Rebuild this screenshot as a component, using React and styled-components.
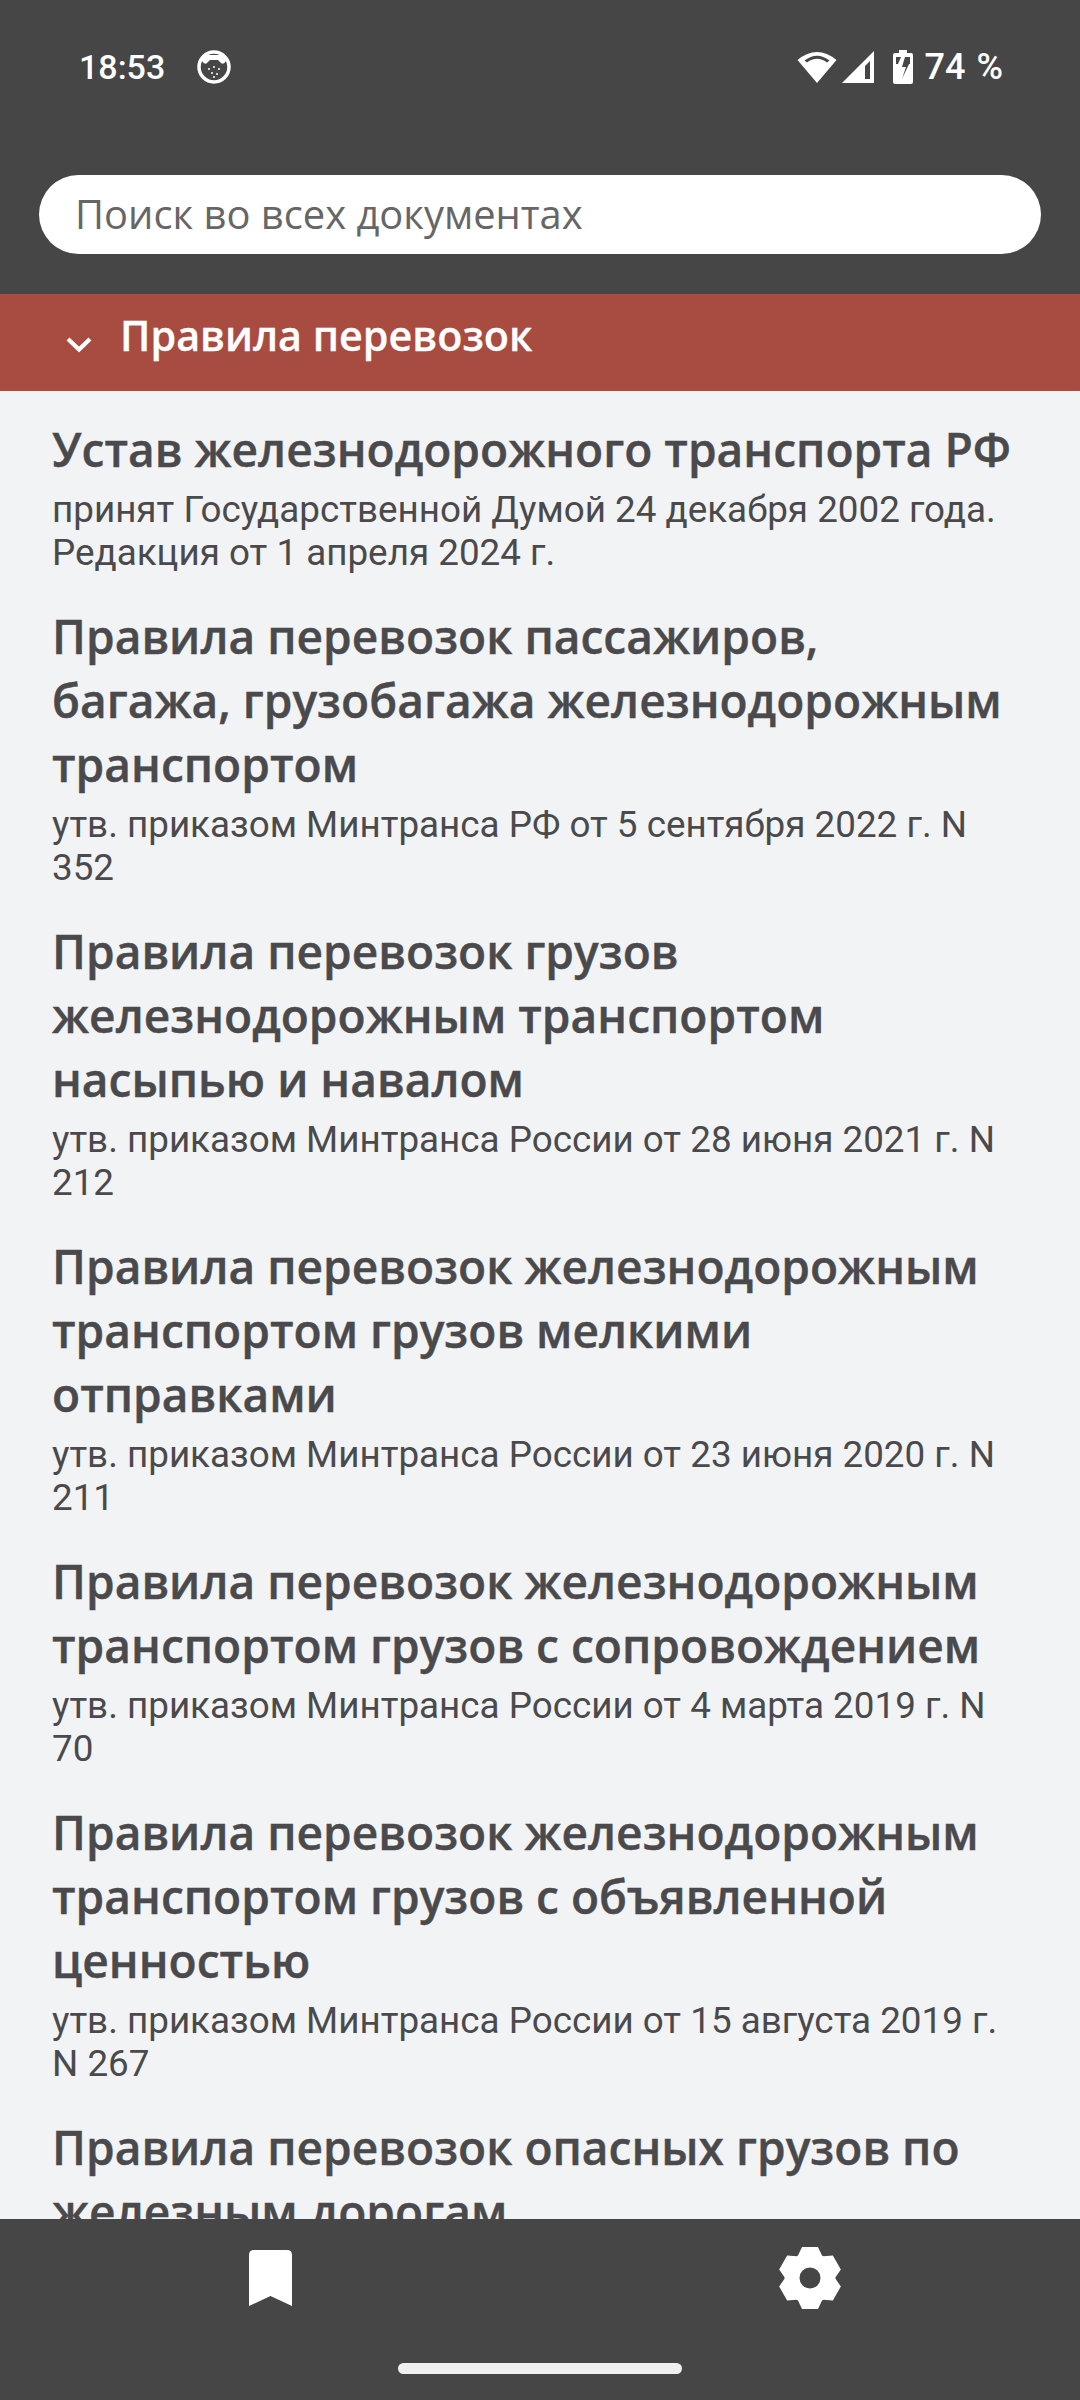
import React from "react";
import styled, { createGlobalStyle } from "styled-components";

const documents = [
  {
    title: "Устав железнодорожного транспорта РФ",
    note: "принят Государственной Думой 24 декабря 2002 года. Редакция от 1 апреля 2024 г.",
  },
  {
    title: "Правила перевозок пассажиров, багажа,\u00a0грузобагажа железнодорожным транспортом",
    note: "утв. приказом Минтранса РФ от 5 сентября 2022 г. N 352",
  },
  {
    title: "Правила перевозок грузов железнодорожным транспортом насыпью и навалом",
    note: "утв. приказом Минтранса России от 28 июня 2021 г. N 212",
  },
  {
    title: "Правила перевозок железнодорожным транспортом грузов мелкими отправками",
    note: "утв. приказом Минтранса России от 23 июня 2020 г. N 211",
  },
  {
    title: "Правила перевозок железнодорожным транспортом грузов с сопровождением",
    note: "утв. приказом Минтранса России от 4 марта 2019 г. N 70",
  },
  {
    title: "Правила перевозок железнодорожным транспортом грузов с объявленной ценностью",
    note: "утв. приказом Минтранса России от 15 августа 2019 г. N 267",
  },
  {
    title: "Правила перевозок опасных грузов по железным дорогам",
    note: "",
  },
];

// six flat teeth around the centre of a 62x62 box
const gearPath = () => {
  const point = (deg, radius, side) => {
    const a = (deg * Math.PI) / 180;
    const x = 31 + radius * Math.sin(a) + side * Math.cos(a);
    const y = 31 - radius * Math.cos(a) + side * Math.sin(a);
    return `${x.toFixed(2)} ${y.toFixed(2)}`;
  };
  const teeth = [0, 60, 120, 180, 240, 300].map(
    (deg) =>
      `L${point(deg, 22.5, -12)} L${point(deg, 31, -8)} L${point(deg, 31, 8)} L${point(deg, 22.5, 12)}`
  );
  return `M${teeth.join(" ").slice(1)} Z`;
};

const App = () => {
  return (
    <Page>
      <GlobalStyle />
      <Header>
        <StatusBar>
          <StatusGroup>
            <Clock>18:53</Clock>
            <CatIcon />
          </StatusGroup>
          <StatusGroup>
            <WifiIcon />
            <SignalIcon />
            <BatteryIcon />
            <BatteryText>74 %</BatteryText>
          </StatusGroup>
        </StatusBar>
        <SearchBox>Поиск во всех документах</SearchBox>
      </Header>
      <Section>
        <Chevron />
        <SectionTitle>Правила перевозок</SectionTitle>
      </Section>
      <List>
        {documents.map((doc) => (
          <Item key={doc.title}>
            <Title>{doc.title}</Title>
            {doc.note && <Note>{doc.note}</Note>}
          </Item>
        ))}
      </List>
      <Footer>
        <Tabs>
          <BookmarkIcon />
          <GearIcon />
        </Tabs>
        <HomeBar />
      </Footer>
    </Page>
  );
};

const CatIcon = () => (
  <CatSvg viewBox="0 0 34 34">
    <circle cx="17" cy="17" r="15" fill="none" stroke="#fff" strokeWidth="3.5" />
    <path d="M5 11 Q8 16 11 12 L13 10 H21 L23 12 Q26 16 29 11 V5 H5 Z" fill="#fff" />
    <g fill="#fff">
      <circle cx="12" cy="19" r="1" />
      <circle cx="17" cy="17" r="1" />
      <circle cx="22" cy="19" r="1" />
      <circle cx="15" cy="23" r="1" />
      <circle cx="20" cy="24" r="1" />
      <circle cx="17" cy="27" r="1" />
    </g>
  </CatSvg>
);

const WifiIcon = () => (
  <WifiSvg viewBox="0 0 40 34">
    <path
      fillRule="evenodd"
      d="M20 33 L0.5 10 Q20 -6 39.5 10 Z M7.5 10.5 Q20 1 32.5 10.5 L30 12.5 Q20 5 10 12.5 Z"
      fill="#fff"
    />
  </WifiSvg>
);

const SignalIcon = () => (
  <SignalSvg viewBox="0 0 34 34">
    <path
      fillRule="evenodd"
      d="M1 33 L33 1 V33 Z M24 29 H29 V11 L24 16 Z"
      fill="#fff"
    />
  </SignalSvg>
);

const BatteryIcon = () => (
  <BatterySvg viewBox="0 0 20 34">
    <path
      fillRule="evenodd"
      d="M6 0 H14 V3 H18 Q20 3 20 5 V32 Q20 34 18 34 H2 Q0 34 0 32 V5 Q0 3 2 3 H6 Z M3 7 V14 H5 L8 7 Z M12 7 L9 17 H13 L9 29 L16 14 H17 V7 Z"
      fill="#fff"
    />
  </BatterySvg>
);

const BookmarkIcon = () => (
  <BookmarkSvg viewBox="0 0 43 56">
    <path d="M0 5 Q0 0 5 0 H38 Q43 0 43 5 V56 L21.5 46 L0 56 Z" fill="#fff" />
  </BookmarkSvg>
);

const GearIcon = () => (
  <GearSvg viewBox="0 0 62 62">
    <path
      fill="#fff"
      fillRule="evenodd"
      d={`${gearPath()} M41.5 31 A10.5 10.5 0 1 0 20.5 31 A10.5 10.5 0 1 0 41.5 31 Z`}
    />
  </GearSvg>
);

const Chevron = () => (
  <ChevronSvg viewBox="0 0 26 17">
    <path d="M2 3 L13 13.5 L24 3" fill="none" stroke="#fff" strokeWidth="4.2" />
  </ChevronSvg>
);

export default App;

const GlobalStyle = createGlobalStyle`
  html, body {
    margin: 0;
    padding: 0;
    background: #464646;
  }
`;

const Page = styled.div`
  display: flex;
  flex-direction: column;
  width: 1080px;
  height: 2400px;
  overflow: hidden;
  background: #f2f3f5;
`;

const Header = styled.header`
  display: flex;
  flex-direction: column;
  flex-shrink: 0;
  height: 294px;
  box-sizing: border-box;
  padding: 40px 39px 0;
  background: #464646;
`;

const StatusBar = styled.div`
  display: flex;
  align-items: center;
  justify-content: space-between;
  height: 54px;
  padding: 0 38px 0 40px;
  margin-bottom: 81px;
`;

const StatusGroup = styled.div`
  display: flex;
  align-items: center;
`;

const Clock = styled.span`
  font: 500 34px "Roboto", sans-serif;
  color: #fff;
`;

const BatteryText = styled.span`
  margin-left: 12px;
  font: 500 36px "Roboto", sans-serif;
  word-spacing: 2px;
  color: #fff;
`;

const CatSvg = styled.svg`
  width: 34px;
  height: 34px;
  margin-left: 32px;
`;

const WifiSvg = styled.svg`
  width: 40px;
  height: 34px;
`;

const SignalSvg = styled.svg`
  width: 34px;
  height: 34px;
  margin-left: 4px;
`;

const BatterySvg = styled.svg`
  width: 20px;
  height: 34px;
  margin-left: 18px;
`;

const SearchBox = styled.div`
  display: flex;
  align-items: center;
  height: 79px;
  padding: 0 0 2px 36px;
  box-sizing: border-box;
  border-radius: 40px;
  background: #fff;
  font: 400 39.9px "Open Sans", sans-serif;
  color: #666;
`;

const Section = styled.div`
  display: flex;
  align-items: center;
  flex-shrink: 0;
  height: 97px;
  padding-left: 66px;
  background: #a84c42;
`;

const ChevronSvg = styled.svg`
  width: 26px;
  height: 17px;
  margin-top: 3px;
`;

const SectionTitle = styled.h2`
  margin: 0 0 15px 28px;
  font: 600 41.3px "Open Sans", sans-serif;
  -webkit-text-stroke: 0.3px #fff;
  color: #fff;
`;

const List = styled.main`
  flex: 1;
  min-height: 0;
  overflow: hidden;
  padding: 27px 53px 0 52px;
  display: flex;
  flex-direction: column;
  gap: 31px;
`;

const Item = styled.article`
  display: flex;
  flex-direction: column;
  gap: 6px;
`;

const Title = styled.h3`
  margin: 0;
  font: 600 46.1px/64px "Open Sans", sans-serif;
  -webkit-text-stroke: 0.4px #4a4a4c;
  color: #4a4a4c;
`;

const Note = styled.p`
  margin: 0;
  font: 400 36.8px/43px "Roboto", sans-serif;
  color: #4a4a4c;
`;

const Footer = styled.footer`
  position: relative;
  flex-shrink: 0;
  height: 181px;
  background: #464646;
`;

const Tabs = styled.nav`
  display: grid;
  grid-template-columns: 1fr 1fr;
  justify-items: center;
  align-items: center;
  height: 118px;
`;

const BookmarkSvg = styled.svg`
  width: 43px;
  height: 56px;
`;

const GearSvg = styled.svg`
  width: 62px;
  height: 62px;
`;

const HomeBar = styled.div`
  width: 284px;
  height: 11px;
  margin: 26px auto 0;
  border-radius: 6px;
  background: #f0f0f0;
`;
